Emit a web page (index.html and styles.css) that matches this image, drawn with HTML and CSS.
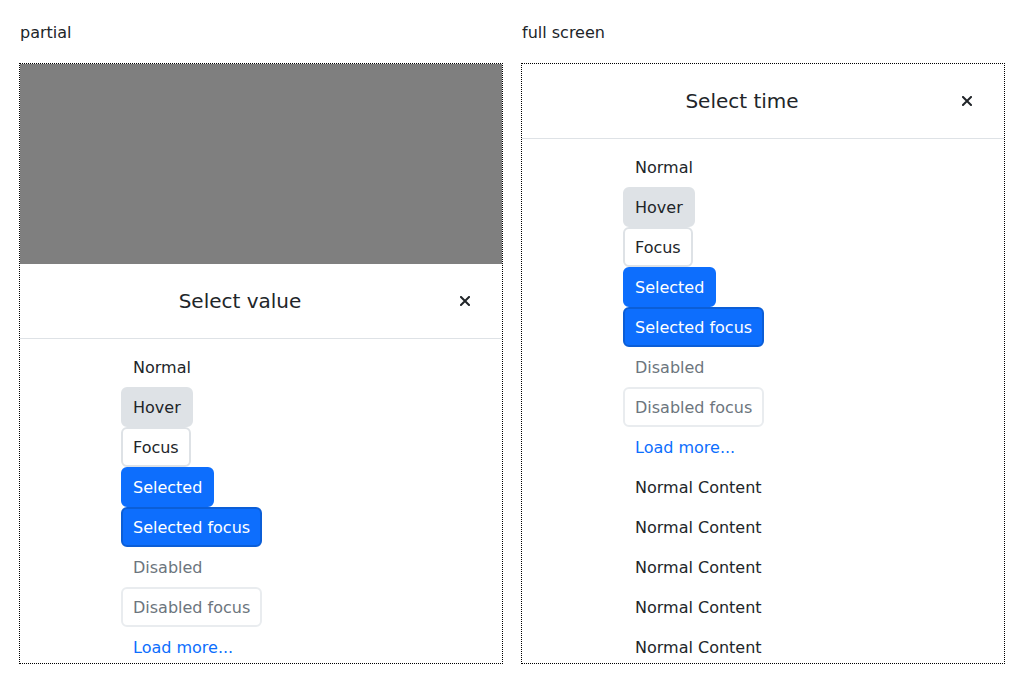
FILE: index.html
```html
<!DOCTYPE html>
<html>
<head>
<meta charset="utf-8">
<link rel="stylesheet" href="styles.css">
</head>
<body>
<div class="grid">
  <section class="col">
    <div class="label">partial</div>
    <div class="frame">
      <div class="backdrop"></div>
      <div class="sheet">
        <div class="header">
          <div class="title">Select value</div>
          <button class="close" aria-label="Close"><svg width="10" height="10" viewBox="0 0 10 10"><path d="M1 1L9 9M9 1L1 9" stroke="#212529" stroke-width="2" stroke-linecap="square"/></svg></button>
        </div>
        <div class="body">
          <div class="list">
            <div class="item">Normal</div>
            <div class="item hover">Hover</div>
            <div class="item focus">Focus</div>
            <div class="item selected">Selected</div>
            <div class="item selected sfocus">Selected focus</div>
            <div class="item disabled">Disabled</div>
            <div class="item disabled dfocus">Disabled focus</div>
            <div class="item more">Load more...</div>
          </div>
        </div>
      </div>
    </div>
  </section>
  <section class="col">
    <div class="label">full screen</div>
    <div class="frame">
      <div class="sheet">
        <div class="header">
          <div class="title">Select time</div>
          <button class="close" aria-label="Close"><svg width="10" height="10" viewBox="0 0 10 10"><path d="M1 1L9 9M9 1L1 9" stroke="#212529" stroke-width="2" stroke-linecap="square"/></svg></button>
        </div>
        <div class="body">
          <div class="list">
            <div class="item">Normal</div>
            <div class="item hover">Hover</div>
            <div class="item focus">Focus</div>
            <div class="item selected">Selected</div>
            <div class="item selected sfocus">Selected focus</div>
            <div class="item disabled">Disabled</div>
            <div class="item disabled dfocus">Disabled focus</div>
            <div class="item more">Load more...</div>
            <div class="item">Normal Content</div>
            <div class="item">Normal Content</div>
            <div class="item">Normal Content</div>
            <div class="item">Normal Content</div>
            <div class="item">Normal Content</div>
          </div>
        </div>
      </div>
    </div>
  </section>
</div>
</body>
</html>
```

FILE: styles.css
```css
* { box-sizing: border-box; }
html, body { margin: 0; background: #fff; }
body {
  font-family: "DejaVu Sans", sans-serif;
  font-size: 16px;
  color: #212529;
  padding: 20px;
}
.grid {
  display: grid;
  grid-template-columns: 1fr 1fr;
  column-gap: 20px;
}
.label {
  height: 24px;
  line-height: 24px;
  padding-top: 1px;
  margin-bottom: 20px;
}
.frame {
  height: 599px;
  outline: 1px dotted #000;
  overflow: hidden;
  display: flex;
  flex-direction: column;
}
.backdrop {
  height: 200px;
  flex: none;
  background: #7f7f7f;
}
.sheet {
  flex: 1;
  background: #fff;
}
.header {
  height: 75px;
  display: flex;
  align-items: center;
  padding: 0 16px;
  border-bottom: 1px solid #dee2e6;
}
.title {
  flex: 1;
  text-align: center;
  font-size: 20px;
  line-height: 30px;
}
.close {
  width: 42px;
  height: 32px;
  border: 0;
  background: transparent;
  padding: 0;
  display: flex;
  align-items: center;
  justify-content: center;
}
.body {
  padding: 8px 0;
}
.list {
  width: 280px;
  margin: 0 auto;
  display: flex;
  flex-direction: column;
  align-items: flex-start;
}
.item {
  height: 40px;
  line-height: 36px;
  padding: 1px 10px 0;
  border: 2px solid transparent;
  border-radius: 6px;
  white-space: nowrap;
}
.hover { background: #dee2e6; border-color: #dee2e6; }
.focus { border-color: #dee2e6; }
.selected { background: #0d6efd; border-color: #0d6efd; color: #fff; }
.sfocus { border-color: #0b5ed7; }
.disabled { color: #6c757d; }
.dfocus { border-color: #e9ecef; }
.more { color: #0d6efd; }
```
